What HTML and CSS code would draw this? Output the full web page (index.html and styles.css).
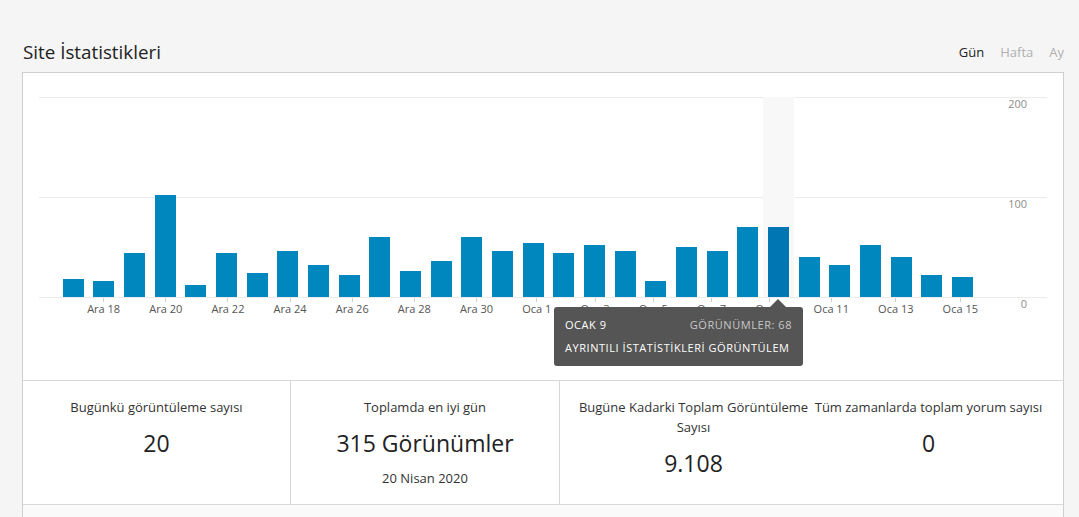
FILE: index.html
```html
<!DOCTYPE html>
<html lang="tr">
<head>
<meta charset="utf-8">
<title>Site İstatistikleri</title>
<link rel="stylesheet" href="styles.css">
</head>
<body>
<div class="wrap">
  <header class="head">
    <h1 class="title">Site İstatistikleri</h1>
    <nav class="tabs">
      <a class="tab tab--on">Gün</a>
      <a class="tab">Hafta</a>
      <a class="tab">Ay</a>
    </nav>
  </header>

  <section class="panel">
    <div class="chart">
      <div class="plot">
        <div class="bars">
          <div class="col"><span class="bar" style="height:18px"></span></div>
          <div class="col"><span class="bar" style="height:16px"></span></div>
          <div class="col"><span class="bar" style="height:44px"></span></div>
          <div class="col"><span class="bar" style="height:102px"></span></div>
          <div class="col"><span class="bar" style="height:12px"></span></div>
          <div class="col"><span class="bar" style="height:44px"></span></div>
          <div class="col"><span class="bar" style="height:24px"></span></div>
          <div class="col"><span class="bar" style="height:46px"></span></div>
          <div class="col"><span class="bar" style="height:32px"></span></div>
          <div class="col"><span class="bar" style="height:22px"></span></div>
          <div class="col"><span class="bar" style="height:60px"></span></div>
          <div class="col"><span class="bar" style="height:26px"></span></div>
          <div class="col"><span class="bar" style="height:36px"></span></div>
          <div class="col"><span class="bar" style="height:60px"></span></div>
          <div class="col"><span class="bar" style="height:46px"></span></div>
          <div class="col"><span class="bar" style="height:54px"></span></div>
          <div class="col"><span class="bar" style="height:44px"></span></div>
          <div class="col"><span class="bar" style="height:52px"></span></div>
          <div class="col"><span class="bar" style="height:46px"></span></div>
          <div class="col"><span class="bar" style="height:16px"></span></div>
          <div class="col"><span class="bar" style="height:50px"></span></div>
          <div class="col"><span class="bar" style="height:46px"></span></div>
          <div class="col"><span class="bar" style="height:70px"></span></div>
          <div class="col col--hi"><span class="bar bar--hi" style="height:70px"></span></div>
          <div class="col"><span class="bar" style="height:40px"></span></div>
          <div class="col"><span class="bar" style="height:32px"></span></div>
          <div class="col"><span class="bar" style="height:52px"></span></div>
          <div class="col"><span class="bar" style="height:40px"></span></div>
          <div class="col"><span class="bar" style="height:22px"></span></div>
          <div class="col"><span class="bar" style="height:20px"></span></div>
        </div>
        <div class="yaxis">
          <span class="ylabel ylabel--200">200</span>
          <span class="ylabel ylabel--100">100</span>
          <span class="ylabel ylabel--0">0</span>
        </div>
      </div>

      <div class="xaxis">
        <div class="xcol"></div>
        <div class="xcol"><i class="tick"></i><span class="xlabel">Ara 18</span></div>
        <div class="xcol"></div>
        <div class="xcol"><i class="tick"></i><span class="xlabel">Ara 20</span></div>
        <div class="xcol"></div>
        <div class="xcol"><i class="tick"></i><span class="xlabel">Ara 22</span></div>
        <div class="xcol"></div>
        <div class="xcol"><i class="tick"></i><span class="xlabel">Ara 24</span></div>
        <div class="xcol"></div>
        <div class="xcol"><i class="tick"></i><span class="xlabel">Ara 26</span></div>
        <div class="xcol"></div>
        <div class="xcol"><i class="tick"></i><span class="xlabel">Ara 28</span></div>
        <div class="xcol"></div>
        <div class="xcol"><i class="tick"></i><span class="xlabel">Ara 30</span></div>
        <div class="xcol"></div>
        <div class="xcol"><i class="tick"></i><span class="xlabel">Oca 1</span></div>
        <div class="xcol"></div>
        <div class="xcol"><i class="tick"></i><span class="xlabel">Oca 3</span></div>
        <div class="xcol"></div>
        <div class="xcol"><i class="tick"></i><span class="xlabel">Oca 5</span></div>
        <div class="xcol"></div>
        <div class="xcol"><i class="tick"></i><span class="xlabel">Oca 7</span></div>
        <div class="xcol"></div>
        <div class="xcol"><i class="tick"></i><span class="xlabel">Oca 9</span></div>
        <div class="xcol"></div>
        <div class="xcol"><i class="tick"></i><span class="xlabel">Oca 11</span></div>
        <div class="xcol"></div>
        <div class="xcol"><i class="tick"></i><span class="xlabel">Oca 13</span></div>
        <div class="xcol"></div>
        <div class="xcol"><i class="tick"></i><span class="xlabel">Oca 15</span></div>
      </div>

      <div class="tip">
        <div class="tip__row">
          <span class="tip__date">Ocak 9</span>
          <span class="tip__views">Görünümler: 68</span>
        </div>
        <div class="tip__link">Ayrıntılı İstatistikleri Görüntülem</div>
      </div>
    </div>

    <div class="stats">
      <div class="stat">
        <div class="stat__label">Bugünkü görüntüleme sayısı</div>
        <div class="stat__value">20</div>
      </div>
      <div class="stat">
        <div class="stat__label">Toplamda en iyi gün</div>
        <div class="stat__value">315 Görünümler</div>
        <div class="stat__sub">20 Nisan 2020</div>
      </div>
      <div class="stat stat--wide">
        <div class="stat__label">Bugüne Kadarki Toplam Görüntüleme Sayısı</div>
        <div class="stat__value">9.108</div>
      </div>
      <div class="stat stat--last">
        <div class="stat__label">Tüm zamanlarda toplam yorum sayısı</div>
        <div class="stat__value">0</div>
      </div>
    </div>
    <div class="more"></div>
  </section>
</div>
</body>
</html>
```

FILE: styles.css
```css
* { box-sizing: border-box; }

html, body {
  margin: 0;
  padding: 0;
  background: #f5f5f5;
  font-family: "Open Sans", "Noto Sans", "Liberation Sans", sans-serif;
  color: #2b2b2b;
}

.wrap {
  padding: 38px 15px 0 22px;
  height: 517px;
  overflow: hidden;
}

.head {
  display: flex;
  justify-content: space-between;
  align-items: flex-start;
  height: 34px;
}

.title {
  margin: 0 0 0 1px;
  font-size: 18.8px;
  font-weight: 400;
  line-height: 28px;
  color: #222;
}

.tabs {
  display: flex;
  gap: 16px;
  margin-top: 4px;
}

.tab {
  font-size: 13px;
  line-height: 20px;
  color: #b0b0b0;
  cursor: pointer;
}

.tab--on { color: #222; }

.panel {
  background: #fff;
  border: 1px solid #cfcfcf;
}

.chart {
  position: relative;
  padding: 24px 16px 65px 16px;
}

.plot {
  display: flex;
  height: 201px;
  border-bottom: 1px solid #ebebeb;
  background:
    linear-gradient(#ebebeb, #ebebeb) 0 0 / 100% 1px no-repeat,
    linear-gradient(#ebebeb, #ebebeb) 0 100px / 100% 1px no-repeat;
}

.bars {
  display: grid;
  grid-template-columns: repeat(30, 1fr);
  width: 920px;
  margin-left: 19px;
}

.col {
  display: flex;
  align-items: flex-end;
  justify-content: center;
}

.col--hi { background: #f8f8f8; }

.bar {
  display: block;
  width: 21px;
  background: #0087be;
}

.bar--hi { background: #0077b3; }

.yaxis {
  position: relative;
  flex: 1;
}

.ylabel {
  position: absolute;
  right: 20px;
  font-size: 11px;
  line-height: 13px;
  color: #8d8d8d;
}

.ylabel--200 { top: 0; }
.ylabel--100 { top: 100px; }
.ylabel--0 { top: 200px; }

.xaxis {
  display: grid;
  grid-template-columns: repeat(30, 1fr);
  width: 920px;
  margin-left: 19px;
  height: 17px;
}

.xcol {
  display: flex;
  flex-direction: column;
  align-items: center;
}

.tick {
  display: block;
  width: 1px;
  height: 4px;
  background: #cfcfcf;
}

.xlabel {
  font-size: 11px;
  line-height: 13px;
  white-space: nowrap;
  color: #555;
}

.tip {
  position: absolute;
  left: 531px;
  top: 234px;
  width: 249px;
  padding: 11px 11px 12px 11px;
  background: #555;
  border-radius: 3px;
  color: #fff;
  font-size: 11px;
  line-height: 13px;
  letter-spacing: 0.55px;
  text-transform: uppercase;
  white-space: nowrap;
}

.tip::before {
  content: "";
  position: absolute;
  left: 216px;
  top: -8px;
  border-left: 8px solid transparent;
  border-right: 8px solid transparent;
  border-bottom: 8px solid #555;
}

.tip__row {
  display: flex;
  justify-content: space-between;
  margin-bottom: 10px;
}

.tip__views { color: #c8c8c8; }

.stats {
  display: flex;
  border-top: 1px solid #d8d8dc;
  border-bottom: 1px solid #d8d8dc;
}

.stat {
  height: 123px;
  padding: 16px 10px 0;
  text-align: center;
  border-right: 1px solid #d8d8dc;
  flex: 0 0 268px;
}

.stat:first-child { flex-basis: 268px; }
.stat:nth-child(2) { flex-basis: 269px; }

.stat--wide {
  flex-basis: 267px;
  margin-right: -33px;
  border-right: 0;
}

.stat--last {
  flex: 1 1 auto;
  border-right: 0;
}

.stat__label {
  font-size: 13px;
  line-height: 20px;
  color: #333;
}

.stat__value {
  margin-top: 11px;
  font-size: 23px;
  line-height: 30px;
  color: #222;
}

.stat__sub {
  margin-top: 10px;
  font-size: 13px;
  line-height: 20px;
  color: #333;
}

.more {
  height: 40px;
  background: #fafafa;
}
```
